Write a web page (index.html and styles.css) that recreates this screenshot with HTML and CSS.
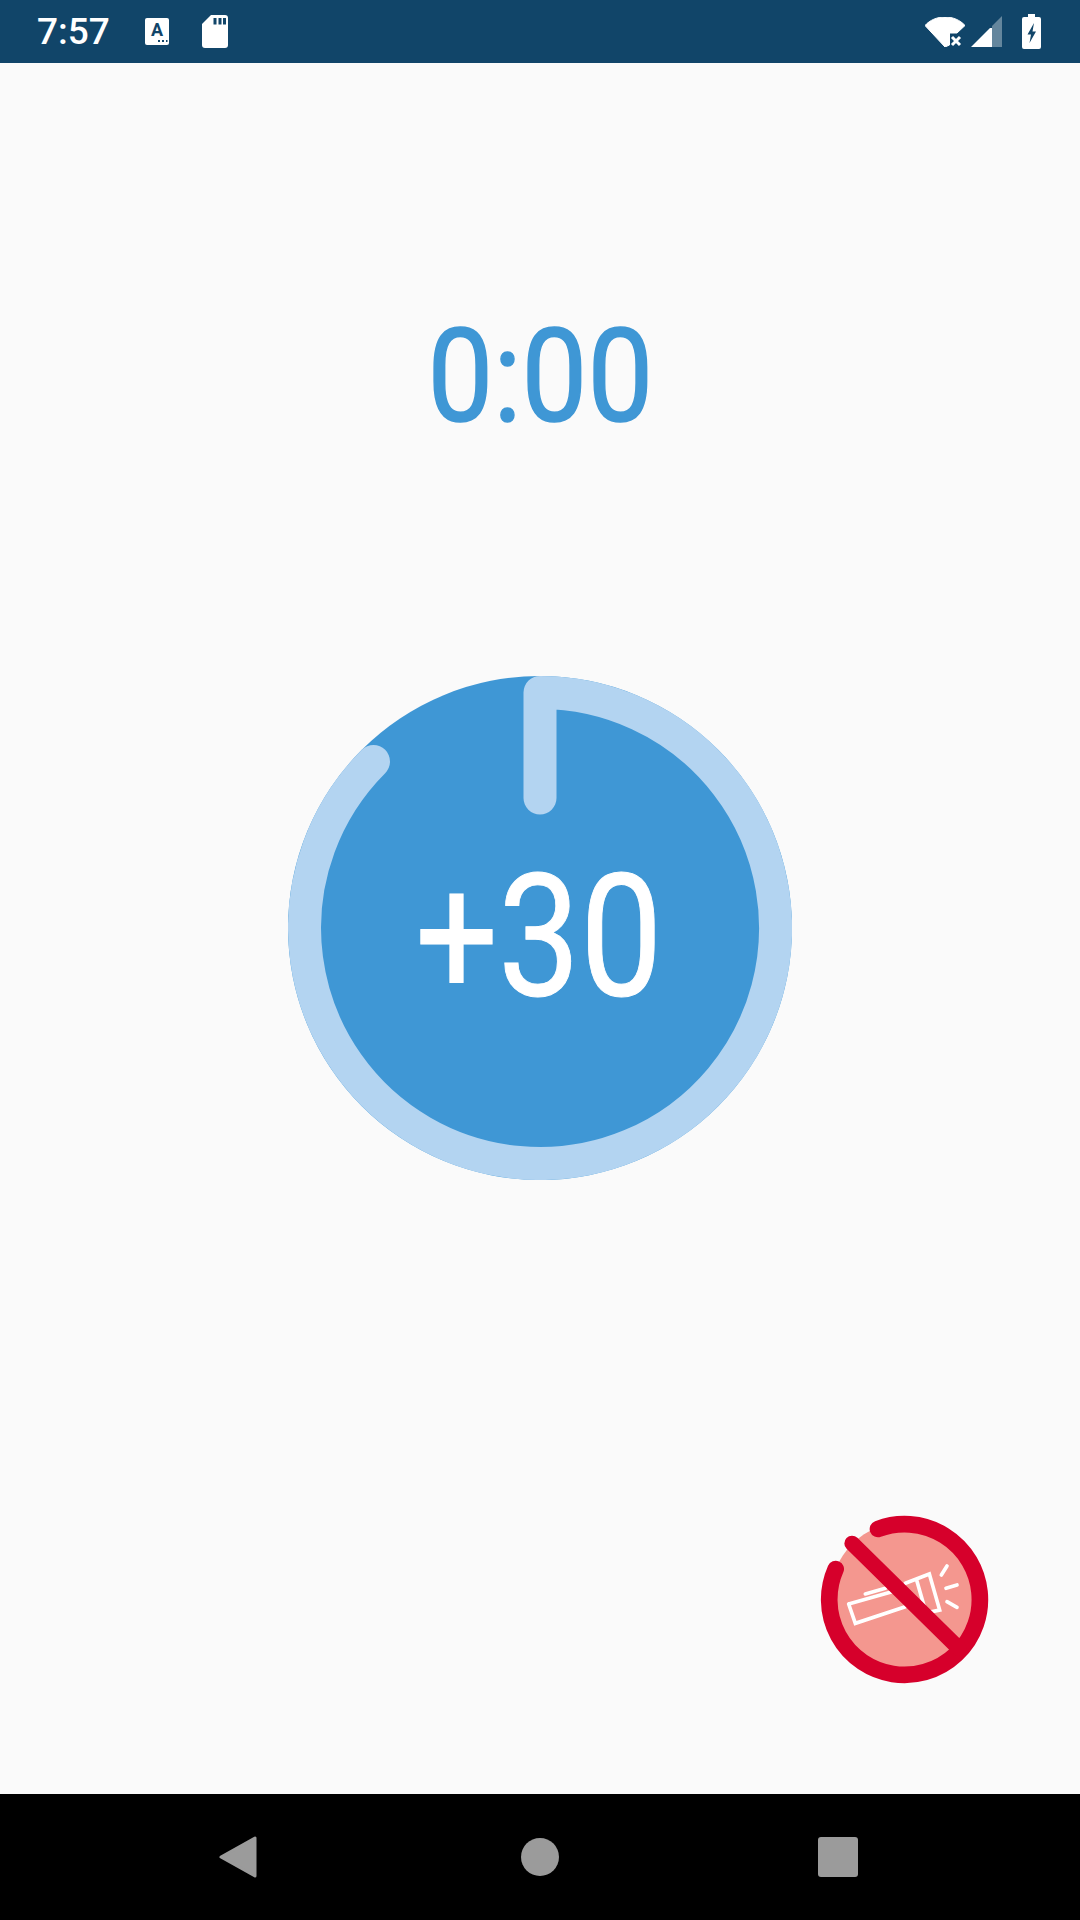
FILE: index.html
```html
<!DOCTYPE html>
<html lang="en">
<head>
<meta charset="utf-8">
<title>Timer</title>
<link rel="stylesheet" href="styles.css">
</head>
<body>
<div class="screen">
  <header class="status">
    <span class="clock">7:57</span>
    <svg class="ic-kb" viewBox="0 0 24 27"><rect width="24" height="27" rx="2" fill="#fff"/><text x="12" y="18" class="kb-a">A</text><path d="M13 23h2M17 23h2M21 23h1.500" stroke="#114569" stroke-width="2"/></svg>
    <svg class="ic-sd" viewBox="0 0 26 33"><path d="M9 0H23a3 3 0 0 1 3 3V30a3 3 0 0 1-3 3H3a3 3 0 0 1-3-3V9Z" fill="#fff"/><path d="M11.500 3h3v6.500h-3ZM16.500 3h3v6.500h-3ZM21 3h3v6.500h-3Z" fill="#114569"/></svg>
    <span class="status-gap"></span>
    <svg class="ic-wifi" viewBox="0 0 40 30"><path d="M0 8.500C5 3 12 0 20 0s15 3 20 8.500L32 16H24.500V28L20 30Z" fill="#fff" stroke="#fff" stroke-width="1" stroke-linejoin="round"/><path d="M27 21l8 8M35 21l-8 8" transform="translate(0 -1)" stroke="#fff" stroke-width="3"/></svg>
    <svg class="ic-signal" viewBox="0 0 31 31"><path d="M31 0V31H21V10Z" fill="#fff" opacity=".35"/><path d="M0 31 19 12H21V31Z" fill="#fff"/></svg>
    <svg class="ic-batt" viewBox="0 0 19 35"><path d="M6 0h7v3h4a2 2 0 0 1 2 2V33a2 2 0 0 1-2 2H2a2 2 0 0 1-2-2V5a2 2 0 0 1 2-2h4Z" fill="#fff"/><path d="M12 9 5.500 20.500H9L7.500 29 14 17.500H10.500Z" fill="#114569"/></svg>
  </header>

  <main class="content">
    <div class="timer"><span class="timer-text">0:00</span></div>
    <div class="dial">
      <svg class="dial-art" viewBox="0 0 504 504">
        <circle cx="252" cy="252" r="252" class="dial-fill"/>
        <path d="M252 122V16.500A235.500 235.500 0 1 1 85.500 85.500" class="dial-ring"/>
      </svg>
      <span class="dial-label">+30</span>
    </div>
    <div class="fab-row">
      <svg class="fab" viewBox="0 0 600 600">
        <circle cx="315" cy="296" r="232" fill="#f4978f"/>
        <g class="torch">
          <path d="M140 312 270 275M310 320 160 370 140 312M190 282 250 265M310 250 382 222 413 330 365 340M343 237 372 338M418 225 435 198M432 265 465 255M435 305 465 322"/>
        </g>
        <path d="M101 207A226 226 0 1 0 228 87" class="fab-ring"/>
        <path d="M150 130 470 445" class="fab-line"/>
      </svg>
    </div>
  </main>

  <nav class="navbar">
    <svg class="nav-back" viewBox="0 0 38 42"><path d="M2 21 36 2V40Z" fill="#9b9b9b" stroke="#9b9b9b" stroke-width="3" stroke-linejoin="round"/></svg>
    <span class="nav-home"></span>
    <span class="nav-recent"></span>
  </nav>
</div>
</body>
</html>
```

FILE: styles.css
```css
* { box-sizing: border-box; }
html, body { margin: 0; padding: 0; }
body { font-family: Roboto, "Liberation Sans", sans-serif; background: #fafafa; }
.screen { width: 1080px; height: 1920px; display: flex; flex-direction: column; overflow: hidden; }

.status { height: 63px; flex: none; background: #114569; display: flex; align-items: center; padding-left: 37px; }
.clock { color: #fff; font-size: 37px; font-weight: 500; line-height: 63px; width: 108px; }
.ic-kb { width: 24px; height: 27px; margin-top: -1px; }
.ic-sd { width: 26px; height: 33px; margin-left: 33px; }
.kb-a { font: 700 18px Roboto, sans-serif; fill: #114569; text-anchor: middle; }
.status-gap { flex: 1; }
.ic-wifi { width: 40px; height: 30px; }
.ic-signal { width: 31px; height: 31px; margin-left: 6px; }
.ic-batt { width: 19px; height: 35px; margin-left: 20px; margin-right: 39px; }

.content { flex: 1; display: flex; flex-direction: column; align-items: center; }
.timer { color: #3f97d5; font-size: 130px; line-height: 158px; margin-top: 235px; }
.timer-text { display: inline-block; transform: scaleX(0.9); -webkit-text-stroke: 1.5px #3f97d5; }
.dial { position: relative; width: 504px; height: 504px; margin-top: 220px; display: flex; align-items: center; justify-content: center; }
.dial-art { position: absolute; inset: 0; width: 504px; height: 504px; }
.dial-fill { fill: #3f97d5; }
.dial-ring { fill: none; stroke: #b3d4f1; stroke-width: 33; stroke-linecap: round; stroke-linejoin: round; }
.dial-label { position: relative; display: inline-block; transform: scaleX(0.86); color: #fff; font-size: 170px; line-height: 1; margin-top: 18px; margin-left: -2px; -webkit-text-stroke: 1px #fff; }
.fab-row { align-self: stretch; display: flex; justify-content: flex-end; margin-top: 320px; padding-right: 78px; }
.fab { width: 200px; height: 200px; }
.fab-ring { fill: none; stroke: #d6002b; stroke-width: 50; stroke-linecap: round; }
.fab-line { fill: none; stroke: #d6002b; stroke-width: 46; stroke-linecap: round; }
.torch path { fill: none; stroke: #fff; stroke-width: 11; stroke-linecap: round; stroke-linejoin: miter; }

.navbar { height: 126px; flex: none; background: #000; display: flex; align-items: center; padding-left: 219px; }
.nav-back { width: 38px; height: 42px; }
.nav-home { width: 38px; height: 38px; border-radius: 50%; background: #9b9b9b; margin-left: 264px; }
.nav-recent { width: 40px; height: 40px; border-radius: 3px; background: #9b9b9b; margin-left: 259px; }
```
